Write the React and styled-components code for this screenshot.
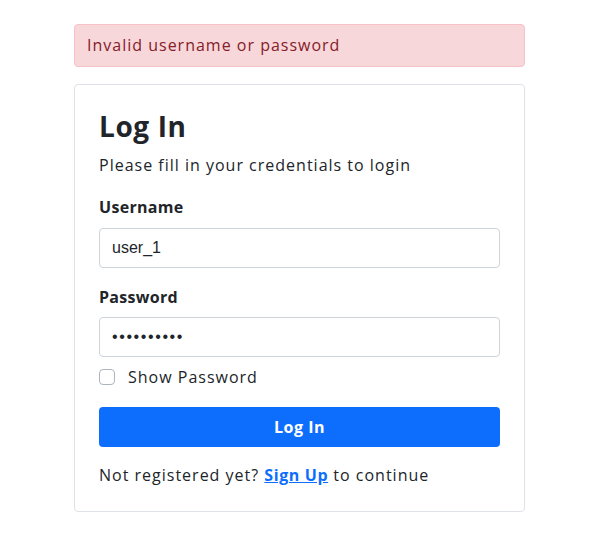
import React from "react";
import styled, { createGlobalStyle } from "styled-components";

const Global = createGlobalStyle`
  html, body { margin: 0; padding: 0; background: #fff; }
  body { font-family: "Open Sans", "Noto Sans", sans-serif; color: #212529; letter-spacing: 1px; }
  * { box-sizing: border-box; }
`;

const Page = styled.div`
  width: 451px;
  margin-left: 74px;
  padding-top: 24px;
  display: flex;
  flex-direction: column;
  gap: 17px;
`;

const Alert = styled.div`
  background: #f8d7da;
  border: 1px solid #f5c2c7;
  color: #842029;
  border-radius: 4px;
  padding: 12px 12px;
  font-size: 16px;
  line-height: 17px;
`;

const Card = styled.div`
  border: 1px solid #dee2e6;
  border-radius: 4px;
  padding: 24px;
  display: flex;
  flex-direction: column;
`;

const Title = styled.h1`
  margin: 0;
  font-size: 28px;
  line-height: 34px;
  font-weight: 700;
  letter-spacing: 0.6px;
  color: #212529;
`;

const Sub = styled.p`
  margin: 10px 0 0;
  font-size: 16px;
  line-height: 24px;
  color: #212529;
`;

const Label = styled.label`
  display: block;
  margin-top: ${(p) => p.$mt}px;
  font-size: 16px;
  line-height: 24px;
  font-weight: 700;
  letter-spacing: 0.3px;
`;

const Input = styled.input`
  display: block;
  width: 100%;
  height: 40px;
  margin-top: ${(p) => p.$mt}px;
  padding: 0 12px;
  border: 1px solid #ced4da;
  border-radius: 4px;
  font-family: "Liberation Sans", Arial, sans-serif;
  font-size: 16px;
  letter-spacing: ${(p) => (p.type === "password" ? "1.6px" : "0")};
  color: #212529;
  outline: none;
`;

const CheckRow = styled.label`
  display: flex;
  align-items: center;
  gap: 13px;
  margin-top: 8px;
  font-size: 16px;
  line-height: 24px;
`;

const Box = styled.span`
  width: 16px;
  height: 16px;
  border: 1px solid #adb5bd;
  border-radius: 4px;
  background: #fff;
`;

const Button = styled.button`
  margin-top: 18px;
  height: 40px;
  width: 100%;
  background: #0d6efd;
  border: none;
  border-radius: 4px;
  color: #fff;
  font-family: inherit;
  font-size: 16px;
  font-weight: 700;
  letter-spacing: 0.5px;
`;

const Footer = styled.p`
  margin: 16px 0 0;
  font-size: 16px;
  line-height: 24px;
`;

const Link = styled.a`
  color: #0d6efd;
  font-weight: 700;
  letter-spacing: 0.6px;
  text-decoration: underline;
`;

export default function App() {
  return (
    <>
      <Global />
      <Page>
        <Alert>Invalid username or password</Alert>
        <Card>
          <Title>Log In</Title>
          <Sub>Please fill in your credentials to login</Sub>
          <Label $mt={18}>Username</Label>
          <Input $mt={9} defaultValue="user_1" />
          <Label $mt={17}>Password</Label>
          <Input $mt={8} type="password" defaultValue="abcdefghij" />
          <CheckRow>
            <Box />
            Show Password
          </CheckRow>
          <Button>Log In</Button>
          <Footer>
            Not registered yet? <Link href="#">Sign Up</Link> to continue
          </Footer>
        </Card>
      </Page>
    </>
  );
}
